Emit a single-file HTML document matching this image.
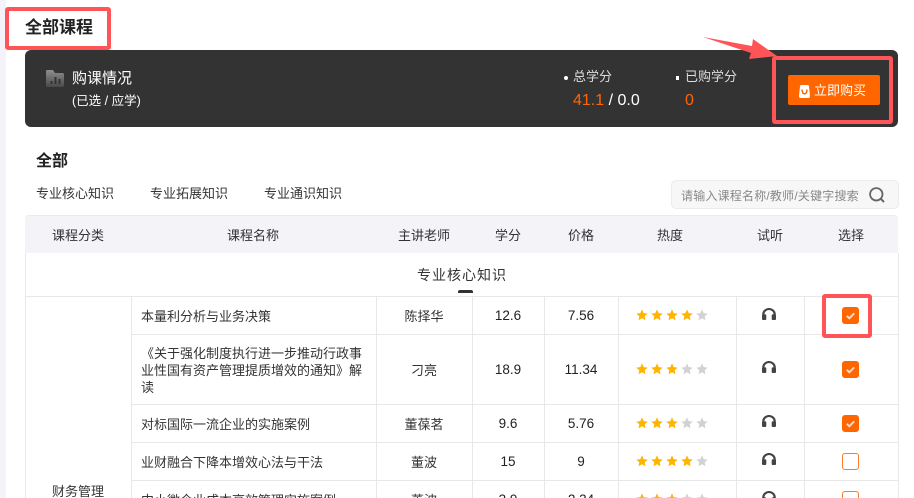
<!DOCTYPE html>
<html lang="zh-CN"><head><meta charset="utf-8"><title>全部课程</title>
<style>
html,body{margin:0;padding:0;background:#fff}
#p{position:relative;width:914px;height:498px;overflow:hidden;background:#fff;font-family:"Liberation Sans","Noto Sans CJK SC",sans-serif;font-size:13px;color:#333}
#p div,#p svg{position:absolute}
.t{white-space:nowrap;line-height:20px;height:20px}
.c{text-align:center;transform:translateX(-50%)}
.n{font-size:13.500px;color:#222}
.h{background:#e8e8e8;height:1px}
.v{background:#e8e8e8;width:1px}
.r{border:4px solid #ff5558;border-radius:3px;box-sizing:border-box}
.o{color:#ff6600}
.ck{width:17px;height:17px;left:842px;box-sizing:border-box;border-radius:3px;background:#ff6600}
.un{background:#fff;border:1px solid #ff7a26}
</style></head><body><div id="p">
<svg width="0" height="0" style="left:0;top:0"><defs>
<symbol id="s" viewBox="0 0 12 12"><path d="M6 .4l1.700 3.700 4 .5-3 2.700.8 4L6 9.300 2.500 11.300l.8-4-3-2.700 4-.5z"/></symbol>
<symbol id="e" viewBox="0 0 14 12"><path d="M1.300 8V6.300a5.700 5.300 0 0 1 11.400 0V8" fill="none" stroke="#444" stroke-width="2.100"/><rect x="0" y="6.200" width="4.300" height="5.800" rx="1.300" fill="#444"/><rect x="9.700" y="6.200" width="4.300" height="5.800" rx="1.300" fill="#444"/></symbol>
<symbol id="k" viewBox="0 0 17 17"><path d="M4.800 8.800l2.600 2.500 4.800-5" fill="none" stroke="#ffdcc6" stroke-width="1.900"/></symbol>
<linearGradient id="g" x1="0" y1="0" x2="0" y2="1"><stop offset="0" stop-color="#8e8e8e"/><stop offset="1" stop-color="#4a4a4a"/></linearGradient>
</defs></svg>

<div style="left:0;top:0;width:6px;height:498px;background:#f3f3f9"></div>

<div class="t" style="left:25px;top:18px;font-size:17px;font-weight:700;color:#222">全部课程</div>

<div style="left:25px;top:50px;width:873px;height:77px;background:#333;border-radius:6px"></div>
<svg style="left:46px;top:70px" width="18" height="17" viewBox="0 0 18 17"><path d="M0 1.500Q0 0 1.500 0H7l2 3h7.500Q18 3 18 4.500V15.500Q18 17 16.500 17H1.500Q0 17 0 15.500z" fill="url(#g)"/><rect x="4.500" y="11" width="2" height="3" fill="#333"/><rect x="8.500" y="7" width="2" height="7" fill="#333"/><rect x="12.500" y="9" width="2" height="5" fill="#333"/></svg>
<div class="t" style="left:72px;top:69px;font-size:15px;color:#fff">购课情况</div>
<div class="t" style="left:72px;top:91px;font-size:12.500px;color:#fff">(已选 / 应学)</div>

<div style="left:564px;top:76px;width:4px;height:4px;border-radius:50%;background:#fff"></div>
<div class="t" style="left:573px;top:67px;color:#ddd">总学分</div>
<div class="t" style="left:573px;top:91px;font-size:16px;color:#fff"><span class="o">41.1</span> / 0.0</div>
<div style="left:676px;top:76px;width:3px;height:4px;background:#fff"></div>
<div class="t" style="left:685px;top:67px;color:#ddd">已购学分</div>
<div class="t o" style="left:685px;top:91px;font-size:16px">0</div>

<div style="left:788px;top:75px;width:92px;height:30px;background:#ff6600;border-radius:2px"></div>
<svg style="left:799px;top:85px" width="11" height="13" viewBox="0 0 11 13"><path d="M1 1.500Q1 0 2.500 0H8.500Q10 0 10 1.500L11 11Q11 13 9.500 13H1.500Q0 13 0 11z" fill="#fff"/><path d="M3 4.500Q3.200 8.800 5.500 8.800T8 4.500" fill="none" stroke="#ff6600" stroke-width="1.500"/></svg>
<div class="t" style="left:814px;top:81px;color:#fff">立即购买</div>

<div class="t" style="left:36px;top:152px;font-size:16px;font-weight:700;color:#222">全部</div>
<div class="t" style="left:36px;top:184px">专业核心知识</div>
<div class="t" style="left:150px;top:184px">专业拓展知识</div>
<div class="t" style="left:264px;top:184px">专业通识知识</div>

<div style="left:671px;top:180px;width:228px;height:29px;box-sizing:border-box;background:#f7f7f7;border:1px solid #ececec;border-radius:5px"></div>
<div class="t" style="left:681px;top:186px;font-size:12px;letter-spacing:.2px;color:#888">请输入课程名称/教师/关键字搜索</div>
<svg style="left:869px;top:187px" width="16" height="16" viewBox="0 0 16 16"><circle cx="7.300" cy="7.300" r="6.200" fill="none" stroke="#666" stroke-width="1.800"/><path d="M11.800 11.800l3.200 3.200" stroke="#666" stroke-width="2" fill="none"/></svg>

<div style="left:25px;top:215px;width:873px;height:38px;background:#f3f3f8;border-top:1px solid #ebebeb;box-sizing:border-box;border-radius:4px 4px 0 0"></div>
<div class="t c" style="left:78px;top:226px">课程分类</div>
<div class="t c" style="left:253px;top:226px">课程名称</div>
<div class="t c" style="left:424px;top:226px">主讲老师</div>
<div class="t c" style="left:508px;top:226px">学分</div>
<div class="t c" style="left:581px;top:226px">价格</div>
<div class="t c" style="left:670px;top:226px">热度</div>
<div class="t c" style="left:770px;top:226px">试听</div>
<div class="t c" style="left:851px;top:226px">选择</div>

<div class="v" style="left:25px;top:253px;height:245px"></div>
<div class="v" style="left:898px;top:253px;height:245px"></div>
<div class="t c" style="left:462px;top:265px;font-size:14px;letter-spacing:1px">专业核心知识</div>
<div style="left:458px;top:290px;width:15px;height:3px;background:#333;border-radius:2px 2px 0 0"></div>

<div class="h" style="left:25px;top:296px;width:873px"></div>
<div class="h" style="left:131px;top:334px;width:767px"></div>
<div class="h" style="left:131px;top:404px;width:767px"></div>
<div class="h" style="left:131px;top:442px;width:767px"></div>
<div class="h" style="left:131px;top:480px;width:767px"></div>
<div class="v" style="left:131px;top:296px;height:202px"></div>
<div class="v" style="left:376px;top:296px;height:202px"></div>
<div class="v" style="left:472px;top:296px;height:202px"></div>
<div class="v" style="left:544px;top:296px;height:202px"></div>
<div class="v" style="left:618px;top:296px;height:202px"></div>
<div class="v" style="left:736px;top:296px;height:202px"></div>
<div class="v" style="left:804px;top:296px;height:202px"></div>

<div class="t c" style="left:78px;top:482px">财务管理</div>

<div class="t" style="left:141px;top:307px">本量利分析与业务决策</div>
<div class="t c" style="left:424px;top:307px">陈择华</div>
<div class="t c n" style="left:508px;top:306px">12.6</div>
<div class="t c n" style="left:581px;top:306px">7.56</div>

<div class="t" style="left:141px;top:344px">《关于强化制度执行进一步推动行政事</div>
<div class="t" style="left:141px;top:361px">业性国有资产管理提质增效的通知》解</div>
<div class="t" style="left:141px;top:378px">读</div>
<div class="t c" style="left:424px;top:361px">刁亮</div>
<div class="t c n" style="left:508px;top:360px">18.9</div>
<div class="t c n" style="left:581px;top:360px">11.34</div>

<div class="t" style="left:141px;top:415px">对标国际一流企业的实施案例</div>
<div class="t c" style="left:424px;top:415px">董葆茗</div>
<div class="t c n" style="left:508px;top:414px">9.6</div>
<div class="t c n" style="left:581px;top:414px">5.76</div>

<div class="t" style="left:141px;top:453px">业财融合下降本增效心法与干法</div>
<div class="t c" style="left:424px;top:453px">董波</div>
<div class="t c n" style="left:508px;top:452px">15</div>
<div class="t c n" style="left:581px;top:452px">9</div>

<div class="t" style="left:141px;top:491px">中小微企业成本高效管理实施案例</div>
<div class="t c" style="left:424px;top:491px">董波</div>
<div class="t c n" style="left:508px;top:490px">3.9</div>
<div class="t c n" style="left:581px;top:490px">2.34</div>

<svg style="left:636px;top:309px" width="74" height="13"><g fill="#ffb400"><use href="#s" x="0" width="12" height="12"/><use href="#s" x="15" width="12" height="12"/><use href="#s" x="30" width="12" height="12"/><use href="#s" x="45" width="12" height="12"/></g><g fill="#d2d2d2"><use href="#s" x="60" width="12" height="12"/></g></svg>
<svg style="left:636px;top:363px" width="74" height="13"><g fill="#ffb400"><use href="#s" x="0" width="12" height="12"/><use href="#s" x="15" width="12" height="12"/><use href="#s" x="30" width="12" height="12"/></g><g fill="#d2d2d2"><use href="#s" x="45" width="12" height="12"/><use href="#s" x="60" width="12" height="12"/></g></svg>
<svg style="left:636px;top:417px" width="74" height="13"><g fill="#ffb400"><use href="#s" x="0" width="12" height="12"/><use href="#s" x="15" width="12" height="12"/><use href="#s" x="30" width="12" height="12"/></g><g fill="#d2d2d2"><use href="#s" x="45" width="12" height="12"/><use href="#s" x="60" width="12" height="12"/></g></svg>
<svg style="left:636px;top:455px" width="74" height="13"><g fill="#ffb400"><use href="#s" x="0" width="12" height="12"/><use href="#s" x="15" width="12" height="12"/><use href="#s" x="30" width="12" height="12"/><use href="#s" x="45" width="12" height="12"/></g><g fill="#d2d2d2"><use href="#s" x="60" width="12" height="12"/></g></svg>
<svg style="left:636px;top:493px" width="74" height="13"><g fill="#ffb400"><use href="#s" x="0" width="12" height="12"/><use href="#s" x="15" width="12" height="12"/><use href="#s" x="30" width="12" height="12"/></g><g fill="#d2d2d2"><use href="#s" x="45" width="12" height="12"/><use href="#s" x="60" width="12" height="12"/></g></svg>

<svg style="left:762px;top:308px" width="14" height="12"><use href="#e" width="14" height="12"/></svg>
<svg style="left:762px;top:361px" width="14" height="12"><use href="#e" width="14" height="12"/></svg>
<svg style="left:762px;top:415px" width="14" height="12"><use href="#e" width="14" height="12"/></svg>
<svg style="left:762px;top:453px" width="14" height="12"><use href="#e" width="14" height="12"/></svg>
<svg style="left:762px;top:491px" width="14" height="12"><use href="#e" width="14" height="12"/></svg>

<div class="ck" style="top:307px"><svg style="left:0;top:0" width="17" height="17"><use href="#k" width="17" height="17"/></svg></div>
<div class="ck" style="top:361px"><svg style="left:0;top:0" width="17" height="17"><use href="#k" width="17" height="17"/></svg></div>
<div class="ck" style="top:415px"><svg style="left:0;top:0" width="17" height="17"><use href="#k" width="17" height="17"/></svg></div>
<div class="ck un" style="top:453px"></div>
<div class="ck un" style="top:491px"></div>

<div class="r" style="left:5px;top:7px;width:106px;height:43px"></div>
<div class="r" style="left:772px;top:56px;width:121px;height:68px"></div>
<div class="r" style="left:822px;top:294px;width:50px;height:44px"></div>
<svg style="left:700px;top:34px" width="82" height="30" viewBox="700 34 82 30"><polygon points="703,37 752,46 753,39 777,56 749,59 751,53" fill="#ff5558"/></svg>
</div></body></html>
